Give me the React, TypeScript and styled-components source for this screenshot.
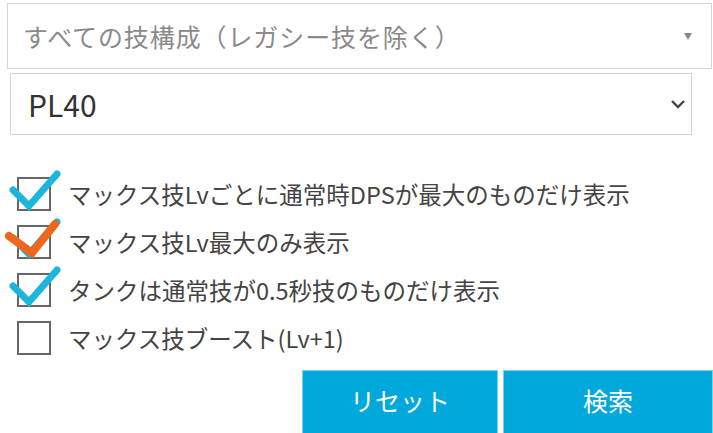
import React from "react";
import styled, { createGlobalStyle } from "styled-components";

const Global = createGlobalStyle`
  html, body { margin: 0; padding: 0; background: #fff; }
  body { font-family: "Noto Sans CJK JP", "Noto Sans", sans-serif; }
`;

const Page = styled.div`
  width: 713px;
  height: 433px;
  overflow: hidden;
  display: flex;
  flex-direction: column;
  & > * { flex: none; }
`;

const ComboBox = styled.div`
  box-sizing: border-box;
  margin: 3px 1px 0 7px;
  height: 66px;
  border: 1px solid #d4d4d4;
  display: flex;
  align-items: center;
  padding: 0 19px 0 15px;
  color: #8a8a8a;
  font-size: 25px;
  letter-spacing: 0.9px;
  justify-content: space-between;
`;

const Triangle = styled.span`
  width: 0;
  height: 0;
  border-left: 4.5px solid transparent;
  border-right: 4.5px solid transparent;
  border-top: 7px solid #8a8a8a;
`;

const NativeSelect = styled.div`
  box-sizing: border-box;
  margin: 4px 0 0 10px;
  width: 682px;
  height: 62px;
  border: 1px solid #d4d4d4;
  display: flex;
  align-items: center;
  justify-content: space-between;
  padding: 0 5px 0 17px;
  color: #333;
  font-size: 30px;
  font-family: "Noto Sans CJK JP", sans-serif;
`;

const Options = styled.div`
  display: flex;
  flex-direction: column;
  margin-top: 35px;
  padding-left: 17px;
`;

const Row = styled.div`
  display: flex;
  align-items: center;
  height: 48px;
  gap: 17px;
  color: #444;
  font-size: 23.5px;
`;

const Box = styled.span`
  position: relative;
  width: 30px;
  height: 30px;
  border: 2px solid #666;
  flex: none;
`;

const CheckSvg = styled.svg`
  position: absolute;
  left: -2px;
  top: -2px;
  overflow: visible;
`;

const Buttons = styled.div`
  display: flex;
  justify-content: flex-end;
  gap: 5px;
  margin-top: 8px;
`;

const Button = styled.button<{ $w: number }>`
  width: ${(p) => p.$w}px;
  height: 64px;
  background: #00a8db;
  border: 1px solid #7fd0ec;
  color: #fff;
  font-family: "Noto Sans CJK JP", sans-serif;
  font-size: 25px;
  padding: 0 0 4px;
  flex: none;
`;

const Check = ({ color, d, w }: { color: string; d: string; w: number }) => (
  <path d={d} stroke={color} strokeWidth={w} fill="none" strokeLinecap="round" strokeLinejoin="miter" />
);

const BLUE = "M-4 13 L12 29 L40 -3";
const ORANGE = "M-8 11 L15 28 L38 -1";

const items = [
  { label: "マックス技Lvごとに通常時DPSが最大のものだけ表示", blue: true, orange: false },
  { label: "マックス技Lv最大のみ表示", blue: true, orange: true },
  { label: "タンクは通常技が0.5秒技のものだけ表示", blue: true, orange: false },
  { label: "マックス技ブースト(Lv+1)", blue: false, orange: false },
];

export default function App() {
  return (
    <Page>
      <Global />
      <ComboBox>
        <span>すべての技構成（レガシー技を除く）</span>
        <Triangle />
      </ComboBox>
      <NativeSelect>
        <span>PL40</span>
        <svg width="16" height="10" viewBox="0 0 16 10">
          <path d="M2 2 L8 8 L14 2" stroke="#444" strokeWidth="2.4" fill="none" />
        </svg>
      </NativeSelect>
      <Options>
        {items.map((it) => (
          <Row key={it.label}>
            <Box>
              {(it.blue || it.orange) && (
                <CheckSvg width="34" height="34" viewBox="0 0 34 34">
                  {it.blue && <Check color="#1cb6dc" d={BLUE} w={7} />}
                  {it.orange && <Check color="#f0661c" d={ORANGE} w={8} />}
                </CheckSvg>
              )}
            </Box>
            <span>{it.label}</span>
          </Row>
        ))}
      </Options>
      <Buttons>
        <Button $w={196}>リセット</Button>
        <Button $w={210}>検索</Button>
      </Buttons>
    </Page>
  );
}
